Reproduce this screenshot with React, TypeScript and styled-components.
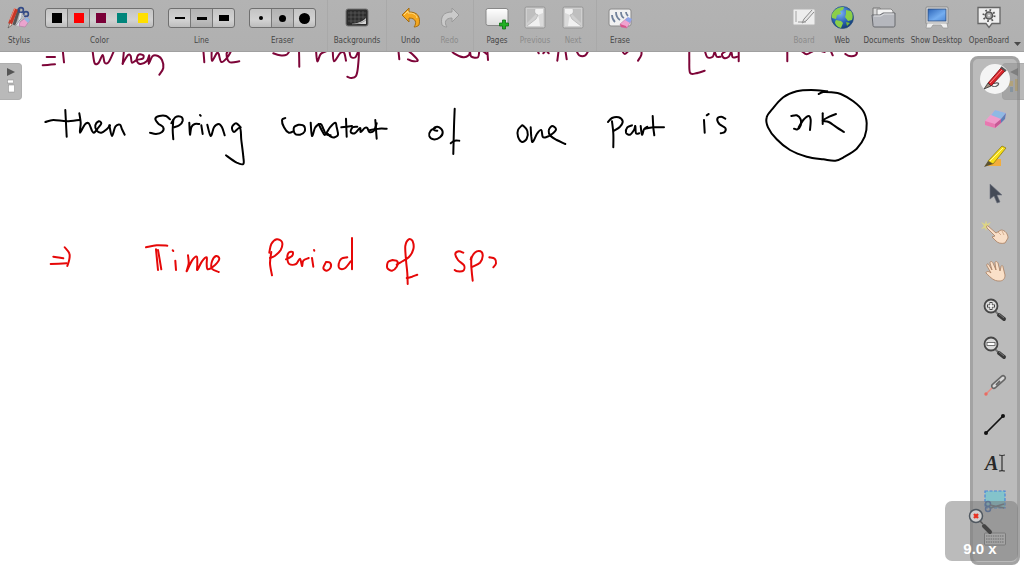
import React from "react";
import styled, { createGlobalStyle } from "styled-components";

const GlobalStyle = createGlobalStyle`
  * { box-sizing: border-box; }
  body { margin: 0; background: #fff; font-family: "DejaVu Sans Condensed", Roboto, sans-serif; }
  button { font: inherit; color: inherit; background: none; border: 0; padding: 0; margin: 0; }
`;

const Page = styled.div`
  display: flex;
  flex-direction: column;
  min-height: 100vh;
`;

const Toolbar = styled.header`
  display: flex;
  height: 52px;
  background: linear-gradient(#b3b3b3, #b0b0b0);
  border-bottom: 1px solid #a0a0a0;
  color: #474747;
`;

const ToolButton = styled.button<{ $width?: number; $dim?: boolean }>`
  display: flex;
  flex-direction: column;
  align-items: center;
  gap: 5px;
  width: ${(p) => p.$width ?? 38}px;
  padding-top: 6px;
  color: ${(p) => (p.$dim ? "#8b8b8b" : "#474747")};
`;

const Label = styled.span`
  font-size: 8px;
  line-height: 12px;
  white-space: nowrap;
`;

const ToolGroup = styled.div`
  display: flex;
  flex-direction: column;
  align-items: center;
  gap: 7px;
  padding: 8px 7px 0;
`;

const Segments = styled.div`
  display: flex;
  height: 20px;
  border: 1px solid #707070;
  border-radius: 3px;
  overflow: hidden;
  background: linear-gradient(#c4c4c4, #d2d2d2 60%, #bdbdbd);
`;

const Segment = styled.button<{ $active?: boolean; $divided?: boolean }>`
  display: grid;
  place-items: center;
  width: ${(p) => (p.$divided ? 22 : 21)}px;
  border-right: ${(p) => (p.$divided ? "1px solid #777" : "0")};
  background: ${(p) => (p.$active ? "rgba(120,120,120,.22)" : "transparent")};
`;

const Swatch = styled.span<{ $color: string }>`
  width: 10px;
  height: 10px;
  background: ${(p) => p.$color};
`;

const LineSample = styled.span<{ $width: number; $thickness: number }>`
  width: ${(p) => p.$width}px;
  height: ${(p) => p.$thickness}px;
  background: #000;
`;

const Dot = styled.span<{ $size: number }>`
  width: ${(p) => p.$size}px;
  height: ${(p) => p.$size}px;
  border-radius: 50%;
  background: #000;
`;

const Separator = styled.div`
  width: 9px;
  background: linear-gradient(90deg, transparent 4px, #a9a9a9 4px, #a9a9a9 5px, transparent 5px);
`;

const RightTools = styled.div`
  display: flex;
  margin-left: auto;
`;

const MoreButton = styled.button`
  display: flex;
  align-items: flex-end;
  width: 12px;
  padding: 0 0 4px 2px;
`;

const Board = styled.main`
  position: relative;
  flex: 1;
  overflow: hidden;
`;

const Ink = styled.svg`
  display: block;
  width: 100%;
  height: 300px;
`;

const SideTab = styled.button<{ $side: "left" | "right" }>`
  position: absolute;
  top: 11px;
  ${(p) => p.$side}: 0;
  display: flex;
  flex-direction: column;
  align-items: center;
  gap: 3px;
  width: 22px;
  height: 37px;
  padding-top: 4px;
  background: #b9b9b9;
  border: 1px solid #afafaf;
  border-${(p) => p.$side}: 0;
  border-radius: ${(p) => (p.$side === "left" ? "0 4px 4px 0" : "4px 0 0 4px")};
`;

const Palette = styled.nav`
  position: absolute;
  top: 4px;
  bottom: 11px;
  right: 4px;
  width: 50px;
  display: flex;
  flex-direction: column;
  padding: 1px 0 3px;
  background: rgba(155, 155, 155, 0.68);
  border: 3px solid rgba(120, 120, 120, 0.36);
  border-radius: 8px;
`;

const PaletteButton = styled.button`
  flex: 1;
  display: grid;
  place-items: center;
`;

const ZoomBadge = styled.div`
  position: absolute;
  right: 6px;
  bottom: 15px;
  width: 73px;
  height: 60px;
  display: flex;
  flex-direction: column;
  align-items: center;
  gap: 2px;
  padding: 5px 3px 0 0;
  border-radius: 7px;
  background: rgba(120, 120, 120, 0.5);
  color: #fff;
  font: bold 15px/18px "Liberation Sans", sans-serif;
`;

/* Pen samples are recorded at three units per pixel, relative to each word group's origin. */
type InkRun = { origin: [number, number]; color: string; strokes: number[][] };

const MAROON = "#7d0538";
const BLACK = "#000";
const RED = "#e60808";

const ink: InkRun[] = [
  {
    origin: [0, 0], color: MAROON, strokes: [
      [128, 196, 165, 193], [140, 171, 165, 171], [188, 150, 192, 187],
      [278, 155, 284, 190, 296, 188, 308, 165, 314, 188, 326, 186, 343, 150],
      [372, 150, 368, 192],
      [368, 190, 384, 165, 392, 168, 396, 188, 410, 180, 428, 176, 430, 166, 416, 164, 410, 180, 420, 192, 440, 184, 448, 166, 446, 192, 458, 168, 474, 168, 486, 180, 490, 204, 478, 224],
      [610, 150, 613, 187],
      [635, 150, 636, 182, 650, 160, 656, 162, 664, 186, 682, 172, 694, 150, 680, 160, 688, 186, 718, 184],
      [820, 160, 840, 166, 860, 164, 870, 150], [897, 150, 898, 200],
      [948, 150, 952, 184, 962, 162, 978, 154],
    ],
  },
  {
    origin: [330, 0], color: MAROON, strokes: [
      [8, 150, 12, 184, 30, 160, 42, 158, 48, 182],
      [58, 150, 62, 170, 76, 172, 86, 155, 84, 200, 78, 228, 64, 234, 52, 230],
      [205, 150, 208, 178], [232, 150, 244, 160, 260, 176, 262, 183, 246, 183, 234, 178],
      [364, 150, 372, 160, 400, 172, 416, 166, 420, 155, 424, 170, 444, 172, 450, 150, 470, 162], [472, 150, 474, 180],
      [622, 150, 626, 160], [640, 160, 648, 152, 656, 160], [686, 150, 682, 182], [706, 150, 710, 178],
      [738, 150, 748, 166, 766, 166, 776, 150], [876, 150, 884, 162, 898, 150], [934, 150, 934, 165, 924, 182],
    ],
  },
  {
    origin: [590, 40], color: MAROON, strokes: [
      [298, 30, 298, 60, 300, 98, 318, 100, 344, 92],
      [345, 34, 352, 52, 368, 50, 374, 36, 380, 50, 392, 50],
      [410, 32, 396, 42, 402, 54, 416, 50, 424, 36, 428, 52, 442, 50], [446, 30, 446, 64],
      [592, 30, 592, 64], [636, 34, 650, 43, 668, 34], [696, 34, 704, 36], [722, 32, 728, 46],
      [786, 30, 800, 36, 796, 46, 778, 48, 766, 42],
    ],
  },
  {
    origin: [30, 40], color: BLACK, strokes: [
      [46, 246, 70, 240, 110, 244, 148, 240], [106, 210, 108, 250, 110, 290],
      [148, 220, 152, 250, 150, 278, 164, 254, 176, 250, 186, 272, 192, 278, 204, 264, 214, 250, 206, 244, 196, 256, 200, 272, 214, 278, 230, 268, 240, 256],
      [238, 256, 246, 288, 256, 260, 270, 254, 276, 268, 284, 284],
      [420, 238, 408, 228, 388, 228, 376, 236, 384, 250, 400, 262, 396, 276, 378, 282, 360, 278],
      [430, 240, 428, 270, 430, 298], [424, 250, 436, 232, 452, 230, 458, 242, 448, 256, 432, 262],
      [478, 248, 480, 284, 484, 262, 494, 252, 508, 252], [514, 256, 518, 282], [510, 225, 512, 227],
      [532, 254, 542, 288, 552, 262, 566, 252, 576, 262, 584, 286],
      [632, 262, 618, 250, 606, 262, 612, 276, 630, 264, 634, 300, 640, 350, 640, 372, 620, 368, 588, 346],
      [766, 234, 756, 240, 762, 262, 776, 278, 790, 274],
      [806, 254, 792, 262, 794, 280, 810, 284, 824, 274, 822, 258, 806, 254],
      [842, 248, 846, 288, 856, 262, 872, 252, 880, 266, 888, 282, 902, 286],
    ],
  },
  {
    origin: [320, 40], color: BLACK, strokes: [
      [-4, 252, 8, 276, 16, 284, 30, 262, 46, 248, 50, 262, 54, 284, 44, 292, 32, 290, 24, 282],
      [78, 236, 80, 290], [64, 262, 96, 258],
      [112, 260, 98, 262, 92, 276, 104, 280, 120, 264, 122, 276, 134, 264, 142, 264, 148, 276, 162, 272, 170, 250],
      [166, 240, 170, 296], [150, 270, 176, 266, 200, 266],
      [346, 264, 332, 272, 328, 288, 340, 298, 360, 292, 368, 276, 358, 262, 344, 262, 342, 270, 352, 272],
      [404, 206, 402, 260, 400, 342], [392, 310, 404, 302, 418, 302],
      [606, 256, 594, 270, 594, 290, 606, 306, 620, 296, 622, 272, 608, 256],
      [632, 262, 634, 290, 638, 306, 652, 280, 664, 270, 668, 290, 678, 292, 696, 282, 708, 268, 696, 258, 686, 272, 692, 288, 710, 300, 736, 312],
    ],
  },
  {
    origin: [590, 40], color: BLACK, strokes: [
      [66, 244, 70, 280, 70, 322], [54, 246, 66, 234, 86, 232, 98, 244, 90, 260, 72, 272],
      [126, 256, 112, 262, 108, 278, 120, 284, 132, 270, 136, 258, 138, 280, 148, 280],
      [152, 258, 156, 284, 162, 268, 172, 260], [188, 228, 190, 262, 193, 286], [166, 266, 190, 262, 222, 262],
      [342, 240, 344, 278], [350, 226, 356, 222], [406, 236, 394, 230, 382, 236, 388, 252, 406, 264, 404, 276, 392, 280],
      [604, 228, 620, 226, 632, 238, 632, 256, 622, 268, 612, 266], [626, 262, 640, 240, 656, 228, 662, 240, 660, 270],
      [698, 220, 698, 252], [738, 222, 718, 230, 698, 242, 716, 246, 740, 262, 762, 276],
      [686, 162, 700, 156, 724, 157, 752, 162, 790, 184, 820, 214, 830, 250, 824, 290, 800, 326, 764, 350, 736, 362, 700, 358, 650, 350, 600, 330, 560, 298, 534, 262, 530, 232, 548, 206, 580, 172, 620, 154, 664, 150, 712, 154],
    ],
  },
  {
    origin: [30, 220], color: RED, strokes: [
      [70, 110, 100, 115], [62, 132, 110, 130], [104, 82, 118, 100, 118, 118, 112, 138],
      [348, 82, 380, 76, 412, 77], [378, 88, 384, 150], [384, 90, 394, 148], [436, 122, 438, 150], [428, 91, 430, 93],
      [474, 106, 476, 130, 470, 154, 486, 122, 500, 110, 502, 132, 502, 150, 516, 124, 530, 112, 530, 134, 534, 148, 556, 134, 568, 116, 558, 108, 546, 124, 546, 146, 566, 156],
    ],
  },
  {
    origin: [260, 220], color: RED, strokes: [
      [34, 96, 30, 130, 36, 166], [28, 98, 34, 72, 50, 58, 66, 66, 62, 90, 44, 108, 30, 114],
      [78, 118, 96, 108, 98, 96, 86, 98, 82, 114, 88, 132, 108, 132, 120, 116, 126, 138, 130, 122, 146, 114],
      [156, 114, 160, 140], [162, 90, 163, 92],
      [198, 126, 190, 144, 200, 152, 212, 142, 210, 128, 198, 126],
      [262, 112, 244, 116, 236, 132, 240, 146, 256, 144, 272, 124], [276, 54, 276, 100, 276, 148],
      [398, 120, 384, 126, 382, 144, 396, 152, 410, 140, 412, 124, 398, 120],
      [410, 134, 424, 126, 446, 112, 460, 88, 458, 64, 446, 58, 436, 78, 438, 120, 442, 160, 443, 192],
      [440, 174, 456, 170, 472, 164],
      [610, 98, 596, 94, 586, 102, 594, 120, 612, 136, 610, 152, 592, 154, 584, 150],
      [634, 112, 634, 140, 638, 182], [632, 118, 644, 98, 662, 94, 668, 108, 660, 128, 638, 140],
      [688, 112, 704, 116, 708, 130, 700, 142],
    ],
  },
];

const TOOLBAR_HEIGHT = 52;

/* Joins the pen samples with a Catmull-Rom curve. */
function curve(samples: number[], [ox, oy]: [number, number]) {
  const pts: [number, number][] = [];
  for (let i = 0; i < samples.length; i += 2) {
    pts.push([ox + samples[i] / 3, oy - TOOLBAR_HEIGHT + samples[i + 1] / 3]);
  }
  let d = `M${pts[0][0].toFixed(1)} ${pts[0][1].toFixed(1)}`;
  for (let i = 0; i < pts.length - 1; i++) {
    const a = pts[i - 1] ?? pts[i];
    const b = pts[i];
    const c = pts[i + 1];
    const e = pts[i + 2] ?? c;
    const n = [b[0] + (c[0] - a[0]) / 6, b[1] + (c[1] - a[1]) / 6, c[0] - (e[0] - b[0]) / 6, c[1] - (e[1] - b[1]) / 6, c[0], c[1]];
    d += `C${n.map((v) => v.toFixed(1)).join(" ")}`;
  }
  return d;
}

const Icon = ({ w = 26, h = 24, children }: { w?: number; h?: number; children: React.ReactNode }) => (
  <svg width={w} height={h} viewBox={`0 0 ${w} ${h}`} fill="none" aria-hidden="true">{children}</svg>
);

const StylusIcon = () => (
  <Icon>
    <path d="M13 3 8 19" stroke="#555" strokeWidth="3" />
    <path d="M10 3 4 18" stroke="#c93626" strokeWidth="4" />
    <path d="M9 2 4 14" stroke="#ec8a78" strokeWidth="1" />
    <path d="m4 17-2 5 4-3" fill="#f3dccb" stroke="#444" strokeWidth=".6" />
    <circle cx="15" cy="4" r="2.4" stroke="#334a86" strokeWidth="1.6" />
    <circle cx="20" cy="8" r="2.4" stroke="#334a86" strokeWidth="1.6" />
    <path d="m18 9-8 10M15 7l-3 13" stroke="#dfe3ea" strokeWidth="1.5" />
    <path d="m18 9-8 10" stroke="#5a6070" strokeWidth=".6" />
    <path d="m14 16 7-5 3 3-5 7-6-1z" fill="#eaa4ce" stroke="#a8709a" strokeWidth=".5" />
    <path d="m18 13 3-2 3 3-2 3z" fill="#8fb7e0" />
  </Icon>
);

const BackgroundsIcon = () => (
  <Icon>
    <rect x="2" y="3" width="22" height="17" rx="2" fill="#2d2d2d" stroke="#777" />
    <path d="M4 7h18M4 11h18M4 15h12M7 5v12M11 5v12M15 5v10M19 5v8" stroke="#666" strokeWidth=".6" />
    <path d="M5 18c7 0 13-2 17-6v6z" fill="#d5d5d5" />
    <path d="M8 18c6 0 10-1 14-4" stroke="#888" strokeWidth=".7" />
  </Icon>
);

const UndoIcon = () => (
  <Icon>
    <path d="M4 9 11 2v4c8 0 12 4 10 13-1 1-3 2-5 2 3-4 2-9-5-9v4z" fill="#f5a81f" stroke="#a36c13" strokeWidth="1" strokeLinejoin="round" />
    <path d="m6 9 4-4v2c5 0 8 1 9 5" stroke="#ffdc83" strokeWidth="1" />
  </Icon>
);
const RedoIcon = () => (
  <Icon>
    <path d="m22 9-7-7v4C7 6 3 10 5 19c1 1 3 2 5 2-3-4-2-9 5-9v4z" fill="#cacaca" stroke="#9a9a9a" strokeWidth="1" strokeLinejoin="round" />
  </Icon>
);

const PagesIcon = () => (
  <Icon>
    <defs>
      <linearGradient id="sheet" x1="0" y1="0" x2="0" y2="1"><stop stopColor="#fff" /><stop offset="1" stopColor="#ddd" /></linearGradient>
    </defs>
    <rect x="2" y="2.5" width="22" height="17" rx="2" fill="url(#sheet)" stroke="#888" />
    <path d="M18.5 14h3v3h3v3h-3v3h-3v-3h-3v-3h3z" fill="#22b022" stroke="#0d6e10" strokeWidth=".8" />
  </Icon>
);

const PreviousIcon = () => (
  <Icon>
    <rect x="3" y="1" width="20" height="21" rx="1.5" fill="#cfcfcf" stroke="#949494" />
    <path d="M5 3h8l1 5-9 9z" fill="#bfbfbf" />
    <path d="M21 3h-8c-1 3 0 5 3 6l-2 4-9 7h16z" fill="#f1f1f1" />
    <path d="m16 9 5-2v13h-3l-1-7z" fill="#dadada" />
    <path d="M13 3c-1 3 0 5 3 6l-2 4-9 7" stroke="#b4b4b4" strokeWidth=".8" />
  </Icon>
);
const NextIcon = () => (
  <Icon>
    <rect x="3" y="1" width="20" height="21" rx="1.5" fill="#cfcfcf" stroke="#949494" />
    <path d="M21 3h-8l-1 5 9 9z" fill="#bfbfbf" />
    <path d="M5 3h8c1 3 0 5-3 6l2 4 9 7H5z" fill="#f1f1f1" />
    <path d="M10 9 5 7v13h3l1-7z" fill="#dadada" />
    <path d="M13 3c1 3 0 5-3 6l2 4 9 7" stroke="#b4b4b4" strokeWidth=".8" />
  </Icon>
);

const EraseIcon = () => (
  <Icon>
    <rect x="2" y="3" width="22" height="17" rx="2" fill="#f1f1f1" stroke="#8a8a8a" />
    <path d="M5 9c0 3 1 5 3 7M9 6c0 4 1 6 4 8M14 6c0 3 1 5 3 6M19 6c0 2 1 3 2 4" stroke="#71819a" strokeWidth="1.8" />
    <path d="m13 18 7-6 4 3-4 7-6-1z" fill="#f0a3d0" stroke="#b0719c" strokeWidth=".5" />
    <path d="m18 14 3-3 4 2-2 4z" fill="#8fa5e8" />
    <path d="m13 18 6 2 1 2-6-1z" fill="#d9568d" />
  </Icon>
);

const BoardIcon = () => (
  <Icon>
    <rect x="2" y="3" width="22" height="16" rx="1" fill="#ededed" stroke="#b5b5b5" />
    <path d="M5 5v11" stroke="#bbb" strokeWidth="1.5" />
    <path d="m21 4-8 9-2 4 4-2 8-9" fill="#e6e6e6" stroke="#8b8b8b" strokeWidth="1" />
    <path d="M7 16h8" stroke="#999" />
  </Icon>
);

const WebIcon = () => (
  <Icon>
    <defs>
      <radialGradient id="globe" cx=".4" cy=".3" r=".75"><stop stopColor="#7db2f5" /><stop offset=".6" stopColor="#2860b4" /><stop offset="1" stopColor="#123569" /></radialGradient>
    </defs>
    <circle cx="13.5" cy="11.5" r="11" fill="url(#globe)" stroke="#244f7d" strokeWidth=".7" />
    <path d="M5 5c3-3 6-4 10-4l-1 3-3 1 1 3-4 1-1 4-4-1c-1-2 0-5 2-7zM7 14l5 1 2 2-2 5c-4-1-6-4-6-6zM17 4l5 1c2 3 2 6 1 9l-4 1-3-4 1-3z" fill="#8bcf48" />
    <path d="m17 16 4 1-3 3z" fill="#74b83a" />
  </Icon>
);

const DocumentsIcon = () => (
  <Icon>
    <path d="M2 2h7l2 3h10v10H2z" fill="#d9d9d9" stroke="#777" />
    <path d="M6 3h14l2 2v10H6z" fill="#f2f2f2" stroke="#888" />
    <path d="M1 9h8l3-2h12v12c0 2-1 2-2 2H4c-2 0-2-1-2-2z" fill="#b5b7bd" stroke="#66686d" />
    <path d="M3 10h7l3-2h10" stroke="#e0e1e4" />
  </Icon>
);

const DesktopIcon = () => (
  <Icon>
    <defs>
      <linearGradient id="screen" x1="0" y1="0" x2="1" y2="1"><stop stopColor="#2b64b8" /><stop offset=".6" stopColor="#75aef0" /><stop offset="1" stopColor="#4d87d6" /></linearGradient>
    </defs>
    <rect x="2" y="1" width="22" height="17" rx="1" fill="#e6e6e6" stroke="#888" />
    <rect x="4" y="3" width="18" height="12" fill="url(#screen)" stroke="#2e4a77" strokeWidth=".8" />
    <path d="m3 17-1 5h5l2-3h8l2 3h5l-1-5z" fill="#eee" stroke="#999" strokeWidth=".8" />
  </Icon>
);

const OpenBoardIcon = () => (
  <Icon>
    <path d="M2 1.500h22v16h-8l-3 4-3-4H2z" fill="#efefef" stroke="#666" strokeWidth="1.3" />
    <circle cx="13" cy="9.5" r="3.5" fill="#aaa" stroke="#555" strokeWidth="1.6" />
    <circle cx="13" cy="9.5" r="5.5" stroke="#555" strokeWidth="2" strokeDasharray="1.6 2.7" />
    <circle cx="13" cy="9.5" r="1" fill="#eee" />
  </Icon>
);

const Magnifier = ({ children }: { children: React.ReactNode }) => (
  <>
    <path d="m13 13 3 3" stroke="#777" strokeWidth="2" />
    <path d="m17 17 5 4" stroke="#3a3a3a" strokeWidth="4" strokeLinecap="round" />
    <path d="m17 16 5 4" stroke="#777" strokeWidth="1" />
    <circle cx="9" cy="8" r="6.5" fill="#dadada" stroke="#454545" strokeWidth="1.8" />
    {children}
  </>
);

const paletteTools: { name: string; art: React.ReactNode }[] = [
  {
    name: "Pen",
    art: (
      <Icon w={32} h={32}>
        <circle cx="16" cy="16" r="15" fill="#f4f4f4" />
        <path d="M10 23c5-4 12-4 9-1-2 2-5 2-7 0" stroke="#555" strokeWidth="1.1" />
        <path d="M9 20 22 5l4 3-14 15z" fill="#d8232a" stroke="#7c1216" strokeWidth=".9" />
        <path d="M11 20 23 7" stroke="#ff8f8a" strokeWidth="1" />
        <path d="m9 20-4 6 7-3z" fill="#a08c7c" stroke="#333" strokeWidth=".8" />
        <path d="m22 4 5 4" stroke="#555" strokeWidth="2" />
      </Icon>
    ),
  },
  {
    name: "Eraser",
    art: (
      <Icon>
        <path d="m3 15 10-11 11 3-1 6-9 9L3 19z" fill="#ef9ccb" />
        <path d="m9 9 4-5 11 3-5 6z" fill="#8fb9e3" />
        <path d="m19 13 5-6-1 6-4 4z" fill="#5b7fb5" />
        <path d="m3 15 10 3v4L3 19z" fill="#e878b0" />
        <path d="m13 18 6-5v4l-6 5z" fill="#c75a95" />
      </Icon>
    ),
  },
  {
    name: "Highlighter",
    art: (
      <Icon>
        <path d="m5 22 8-7h6v7z" fill="#f2ad3c" />
        <path d="M6 17 20 2l4 2-13 16z" fill="#f7df18" stroke="#8d7a10" strokeWidth=".8" />
        <path d="M8 17 21 4" stroke="#fff69a" strokeWidth="1" />
        <path d="m6 17-4 6 9-3z" fill="#5c5230" />
      </Icon>
    ),
  },
  { name: "Select", art: <Icon><path d="M8 2v15l4-3 3 7 3-1-3-7h5z" fill="#454b57" stroke="#6f7480" strokeWidth=".6" /></Icon> },
  {
    name: "Interact",
    art: (
      <Icon w={30} h={28}>
        <path d="m6 1 1 4 4-2-3 4 3 3-4-1-1 3-1-3-4 1 3-3-3-4 4 2z" fill="#ddd584" />
        <path d="m8 7 8 7 5-3c4 0 7 4 7 8l-3 5c-4 1-7 0-9-2l-4-4 3-1-8-8c-1-2 0-3 1-2z" fill="#f9dfc8" stroke="#a87e60" strokeWidth=".8" />
        <path d="m18 13 3 3M22 12l2 4" stroke="#c39877" strokeWidth=".7" />
      </Icon>
    ),
  },
  {
    name: "Hand",
    art: (
      <Icon>
        <path d="M9 14 5 7c-1-2 1-3 2-1l3 5-2-7c0-2 2-2 3 0l3 7-1-7c0-2 2-2 3 0l2 8 1-4c0-2 2-2 2 0l2 8c0 4-2 6-6 6-5 0-8-3-13-8 0-2 3-2 5 0z" fill="#fae0c8" stroke="#a87e60" strokeWidth=".8" />
      </Icon>
    ),
  },
  { name: "Zoom In", art: <Icon><Magnifier><path d="M5 8h8M9 4v8" stroke="#444" strokeWidth="3" /><path d="M6 8h6M9 5v6" stroke="#fff" strokeWidth="1.6" /></Magnifier></Icon> },
  { name: "Zoom Out", art: <Icon><Magnifier><rect x="5" y="6.5" width="8" height="3" fill="#fff" stroke="#555" strokeWidth=".8" /></Magnifier></Icon> },
  {
    name: "Laser Pointer",
    art: (
      <Icon>
        <path d="m3 21 8-8" stroke="#e98a80" strokeWidth="1.5" />
        <circle cx="4" cy="20" r="1.7" fill="#e86d64" />
        <path d="m12 12 9-8" stroke="#666" strokeWidth="6" strokeLinecap="round" />
        <path d="m12 12 9-8" stroke="#d8d8d8" strokeWidth="3" strokeLinecap="round" />
        <path d="m14 11 4-4" stroke="#666" strokeWidth="1.8" />
      </Icon>
    ),
  },
  { name: "Line", art: <Icon><path d="M4 20 21 3" stroke="#111" strokeWidth="1.7" /><circle cx="4" cy="20" r="2" fill="#111" /><circle cx="21" cy="3" r="2" fill="#111" /></Icon> },
  {
    name: "Text",
    art: (
      <Icon>
        <text x="3" y="19" fill="#282828" fontFamily="Liberation Serif, serif" fontSize="20" fontWeight="bold" fontStyle="italic">A</text>
        <path d="M17 4c2 0 3 0 3 1 0-1 1-1 3-1M20 5v14M17 20c2 0 3 0 3-1 0 1 1 1 3 1" stroke="#333" strokeWidth="1.2" />
      </Icon>
    ),
  },
  {
    name: "Capture",
    art: (
      <Icon>
        <rect x="3" y="2" width="20" height="17" fill="#84c3cb" stroke="#4a86d8" strokeWidth="1.2" strokeDasharray="3 1.5" />
        <circle cx="6" cy="15" r="2.5" stroke="#4a6da8" strokeWidth="1.5" />
        <circle cx="6" cy="20" r="2.500" stroke="#4a6da8" strokeWidth="1.5" />
        <path d="m8 19 14-4M8 16l14 3" stroke="#6a7480" strokeWidth="1.5" />
      </Icon>
    ),
  },
  {
    name: "Virtual Keyboard",
    art: (
      <Icon>
        <rect x="2.5" y="5" width="21" height="12" rx="1" fill="#d0d0d0" stroke="#7c7c7c" />
        <path d="M4 8h18M4 11h18M4 14h18" stroke="#858585" strokeWidth="1.4" strokeDasharray="1.5 .8" />
      </Icon>
    ),
  },
];

const colors = [
  { name: "Black", value: "#000" }, { name: "Red", value: "#ff0000" }, { name: "Maroon", value: "#7a0038" },
  { name: "Teal", value: "#00857b" }, { name: "Yellow", value: "#ffdf00" },
];
const lines = [{ name: "Fine line", w: 10, t: 2 }, { name: "Medium line", w: 10, t: 3 }, { name: "Strong line", w: 10, t: 6 }];
const erasers = [{ name: "Small eraser", d: 4 }, { name: "Medium eraser", d: 7 }, { name: "Large eraser", d: 11 }];

const Tool = ({ label, icon, width, dim }: { label: string; icon: React.ReactNode; width?: number; dim?: boolean }) => (
  <ToolButton type="button" $width={width} $dim={dim} disabled={dim}>
    {icon}
    <Label>{label}</Label>
  </ToolButton>
);

export default function App() {
  return (
    <Page>
      <GlobalStyle />
      <Toolbar>
        <Tool label="Stylus" icon={<StylusIcon />} />
        <ToolGroup>
          <Segments>
            {colors.map((c, i) => (
              <Segment key={c.name} type="button" aria-label={c.name} $active={i === 1} $divided={i < 2}>
                <Swatch $color={c.value} />
              </Segment>
            ))}
          </Segments>
          <Label>Color</Label>
        </ToolGroup>
        <ToolGroup>
          <Segments>
            {lines.map((l, i) => (
              <Segment key={l.name} type="button" aria-label={l.name} $active={i === 1} $divided={i < 2}>
                <LineSample $width={l.w} $thickness={l.t} />
              </Segment>
            ))}
          </Segments>
          <Label>Line</Label>
        </ToolGroup>
        <ToolGroup>
          <Segments>
            {erasers.map((e, i) => (
              <Segment key={e.name} type="button" aria-label={e.name} $active={i === 1} $divided={i < 2}>
                <Dot $size={e.d} />
              </Segment>
            ))}
          </Segments>
          <Label>Eraser</Label>
        </ToolGroup>
        <Separator />
        <Tool label="Backgrounds" icon={<BackgroundsIcon />} width={50} />
        <Separator />
        <Tool label="Undo" icon={<UndoIcon />} width={39} />
        <Tool label="Redo" icon={<RedoIcon />} width={39} dim />
        <Separator />
        <Tool label="Pages" icon={<PagesIcon />} />
        <Tool label="Previous" icon={<PreviousIcon />} dim />
        <Tool label="Next" icon={<NextIcon />} dim />
        <Separator />
        <Tool label="Erase" icon={<EraseIcon />} />
        <RightTools>
          <Tool label="Board" icon={<BoardIcon />} dim />
          <Tool label="Web" icon={<WebIcon />} />
          <Tool label="Documents" icon={<DocumentsIcon />} width={46} />
          <Tool label="Show Desktop" icon={<DesktopIcon />} width={59} />
          <Tool label="OpenBoard" icon={<OpenBoardIcon />} width={46} />
          <MoreButton type="button" aria-label="More">
            <Icon w={7} h={5}><path d="M0 0h7L3.500 4z" fill="#4a4a4a" /></Icon>
          </MoreButton>
        </RightTools>
      </Toolbar>
      <Board>
        <Ink role="img" aria-label="Handwritten notes" fill="none" strokeWidth="2" strokeLinecap="round" strokeLinejoin="round">
          {ink.map((run, r) => (
            <g key={r} stroke={run.color}>
              {run.strokes.map((s, i) => <path key={i} d={curve(s, run.origin)} />)}
            </g>
          ))}
        </Ink>
        <SideTab type="button" $side="left" aria-label="Show pages">
          <Icon w={8} h={8}><path d="M0 0v8l8-4z" fill="#555" /></Icon>
          <Icon w={8} h={14}>
            <rect x=".5" y="1" width="6" height="3" fill="#fff" stroke="#888" strokeWidth=".5" />
            <rect x="1.5" y="6" width="6" height="7" fill="#fff" stroke="#888" strokeWidth=".5" />
          </Icon>
        </SideTab>
        <SideTab type="button" $side="right" aria-label="Show library">
          <Icon w={8} h={8}><path d="M8 0v8L0 4z" fill="#444" /></Icon>
          <Icon w={12} h={14}>
            <path d="M1 2h4v5H1z" fill="#e0b23a" /><path d="M7 0h3v12H7z" fill="#c9a33a" /><path d="M2 8h3v5H2z" fill="#5a86a8" />
          </Icon>
        </SideTab>
        <Palette aria-label="Drawing tools">
          {paletteTools.map((t) => (
            <PaletteButton key={t.name} type="button" aria-label={t.name}>{t.art}</PaletteButton>
          ))}
        </Palette>
        <ZoomBadge>
          <Icon w={32} h={32}>
            <path d="m20 20 6 6" stroke="#444" strokeWidth="4" strokeLinecap="round" />
            <circle cx="12" cy="10" r="6.5" fill="#cfcfcf" stroke="#505860" strokeWidth="1.5" />
            <path d="m16 15 3 3" stroke="#555" strokeWidth="1.5" />
            <path d="m10 8 4 4m0-4-4 4" stroke="#e83020" strokeWidth="2.4" />
          </Icon>
          <span>9.0 x</span>
        </ZoomBadge>
      </Board>
    </Page>
  );
}
